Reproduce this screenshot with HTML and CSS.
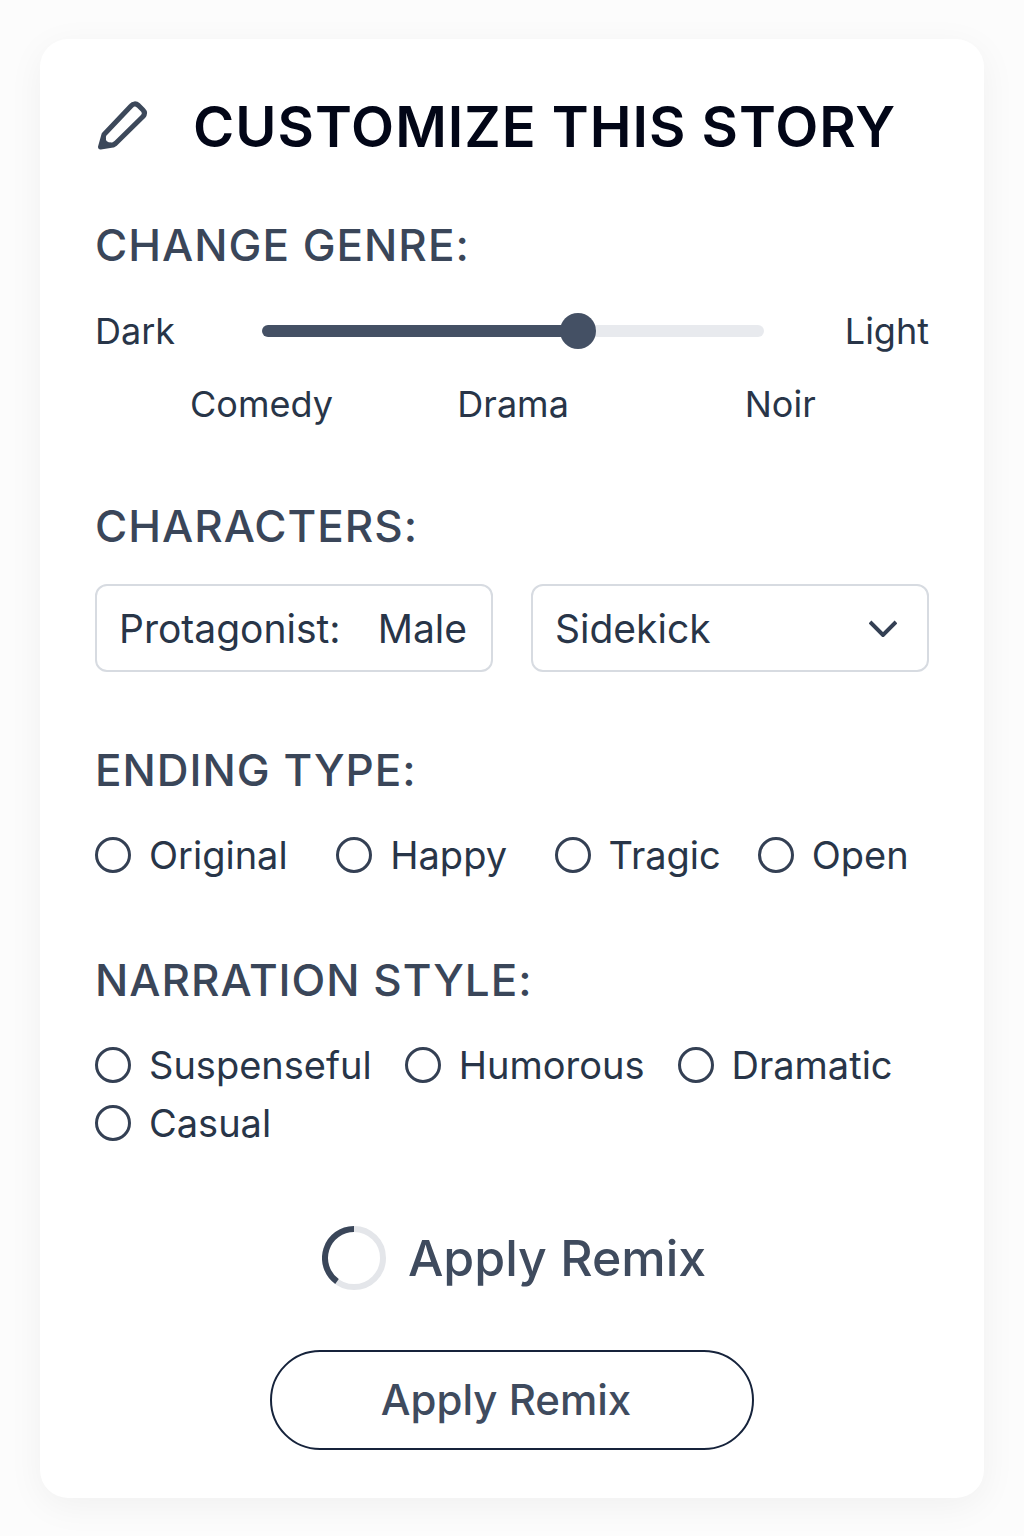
FILE: index.html
```html
<!DOCTYPE html>
<html lang="en">
<head>
<meta charset="utf-8">
<meta name="viewport" content="width=device-width, initial-scale=1">
<title>Customize This Story</title>
<link rel="stylesheet" href="styles.css">
</head>
<body>
<main>
<form class="card">
  <header class="card-header">
    <svg class="pencil" viewBox="0 0 56 56" aria-hidden="true">
      <path class="pencil-body" d="M5.500 48 9 35.500 36 7Q39.500 3 43.500 6.500L48 11Q51 14 48 17.500L20.500 44.500 18 46Z"/>
      <path class="pencil-tip" d="M4 50 7 36 11 38.500Q10 43.500 16.500 43.500L19 47.500Z"/>
    </svg>
    <h1 class="title">CUSTOMIZE THIS STORY</h1>
  </header>

  <section class="section">
    <h2 class="heading" id="genre">CHANGE GENRE:</h2>
    <div class="slider-row">
      <span>Dark</span>
      <input class="slider" type="range" min="0" max="100" value="64" aria-labelledby="genre">
      <span class="slider-end">Light</span>
    </div>
    <div class="genres">
      <span>Comedy</span>
      <span>Drama</span>
      <span>Noir</span>
    </div>
  </section>

  <section class="section">
    <h2 class="heading">CHARACTERS:</h2>
    <div class="fields">
      <div class="field">
        <label for="protagonist">Protagonist:</label>
        <input class="field-input" id="protagonist" type="text" value="Male">
      </div>
      <div class="field field-select">
        <select class="select" aria-label="Sidekick">
          <option>Sidekick</option>
        </select>
        <svg class="chevron" viewBox="0 0 28 18" aria-hidden="true"><path d="M1 3 14 16 27 3"/></svg>
      </div>
    </div>
  </section>

  <section class="section">
    <h2 class="heading" id="ending">ENDING TYPE:</h2>
    <div class="endings" role="radiogroup" aria-labelledby="ending">
      <label class="option"><input class="radio" type="radio" name="ending">Original</label>
      <label class="option"><input class="radio" type="radio" name="ending">Happy</label>
      <label class="option"><input class="radio" type="radio" name="ending">Tragic</label>
      <label class="option"><input class="radio" type="radio" name="ending">Open</label>
    </div>
  </section>

  <section class="section">
    <h2 class="heading" id="narration">NARRATION STYLE:</h2>
    <div class="narration" role="radiogroup" aria-labelledby="narration">
      <label class="option"><input class="radio" type="radio" name="narration">Suspenseful</label>
      <label class="option"><input class="radio" type="radio" name="narration">Humorous</label>
      <label class="option"><input class="radio" type="radio" name="narration">Dramatic</label>
      <label class="option"><input class="radio" type="radio" name="narration">Casual</label>
    </div>
  </section>

  <div class="status" role="status">
    <svg class="spinner" viewBox="0 0 64 64" aria-hidden="true">
      <circle class="spinner-track" cx="32" cy="32" r="29"/>
      <path class="spinner-arc" d="M32 3A29 29 0 0 0 15 55.500"/>
    </svg>
    <span>Apply Remix</span>
  </div>
  <button class="apply" type="button">Apply Remix</button>
</form>
</main>
</body>
</html>
```
FILE: styles.css
```css
* {
  box-sizing: border-box;
}

body {
  margin: 0;
  background: #fcfcfc;
  color: #283548;
  font-family: Inter, "Liberation Sans", sans-serif;
  font-size: 38px;
}

main {
  padding: 39px 40px 38px;
}

.card {
  display: flex;
  flex-direction: column;
  padding: 56px 55px 48px;
  border-radius: 28px;
  background: #fff;
  box-shadow: 0 8px 36px rgba(0, 0, 0, 0.05);
}

.card-header {
  display: flex;
  align-items: center;
  gap: 42px;
  margin-bottom: 58px;
}

.pencil {
  flex: none;
  width: 56px;
  height: 56px;
}

.pencil-body {
  fill: none;
  stroke: #3c485a;
  stroke-width: 5;
  stroke-linejoin: round;
}

.pencil-tip {
  fill: #3c485a;
}

.title {
  margin: 0;
  color: #020617;
  font-size: 56px;
  font-weight: 600;
  line-height: 64px;
  letter-spacing: 1px;
}

.section {
  margin-bottom: 70px;
}

.heading {
  margin: 0 0 30px;
  color: #3a4659;
  font-size: 44px;
  font-weight: 500;
  line-height: 56px;
  letter-spacing: 1px;
}

.slider-row {
  display: grid;
  grid-template-columns: 167px 1fr 165px;
  align-items: center;
  font-size: 36px;
  line-height: 56px;
}

.slider-end {
  text-align: right;
}

.slider {
  width: 100%;
  height: 36px;
  margin: 0;
  appearance: none;
  background: transparent;
}

.slider::-webkit-slider-runnable-track {
  height: 12px;
  border-radius: 6px;
  background: linear-gradient(to right, #445064 63%, #e8eaee 63%);
}

.slider::-webkit-slider-thumb {
  appearance: none;
  width: 36px;
  height: 36px;
  margin-top: -12px;
  border-radius: 50%;
  background: #445064;
}

.genres {
  display: grid;
  grid-template-columns: 267fr 287fr 184fr;
  margin-top: 21px;
  padding-left: 95px;
  font-size: 36px;
  line-height: 48px;
}

.fields {
  display: grid;
  grid-template-columns: 1fr 1fr;
  gap: 38px;
  font-size: 39px;
}

.field {
  display: flex;
  align-items: center;
  justify-content: space-between;
  height: 88px;
  padding: 0 24px 0 22px;
  border: 2px solid #d7dbe1;
  border-radius: 12px;
}

.field-input {
  width: 92px;
  padding: 0;
  border: 0;
  background: none;
  color: inherit;
  font: inherit;
  text-align: right;
}

.field-select {
  display: grid;
  grid-template-columns: 1fr;
  padding: 0;
}

.select {
  grid-area: 1 / 1;
  width: 100%;
  height: 84px;
  padding: 0 22px;
  border: 0;
  border-radius: 12px;
  appearance: none;
  background: none;
  color: inherit;
  font: inherit;
}

.chevron {
  grid-area: 1 / 1;
  justify-self: end;
  width: 28px;
  height: 18px;
  margin-right: 30px;
  fill: none;
  stroke: #344054;
  stroke-width: 4;
  pointer-events: none;
}

.endings {
  display: grid;
  grid-template-columns: 241fr 218fr 203fr 171fr;
}

.narration {
  display: flex;
  flex-wrap: wrap;
  gap: 4px 33px;
}

.option {
  display: flex;
  align-items: center;
  gap: 18px;
  line-height: 54px;
}

.radio {
  flex: none;
  width: 36px;
  height: 36px;
  margin: 0;
  border: 3px solid #344054;
  border-radius: 50%;
  appearance: none;
}

.radio:checked {
  background: radial-gradient(#344054 50%, transparent 52%);
}

.status {
  display: flex;
  align-items: center;
  justify-content: center;
  gap: 22px;
  margin: 6px 0 60px;
  padding-left: 4px;
  color: #3f4b5e;
  font-size: 50px;
  font-weight: 500;
  line-height: 64px;
}

.spinner {
  width: 64px;
  height: 64px;
  fill: none;
  stroke-width: 6;
}

.spinner-track {
  stroke: #e4e6ea;
}

.spinner-arc {
  stroke: #3a4659;
}

.apply {
  align-self: center;
  width: 484px;
  max-width: 100%;
  height: 100px;
  padding: 0 12px 2px 0;
  border: 2px solid #16233b;
  border-radius: 50px;
  background: #fff;
  color: #3f4b5e;
  font: 500 42px Inter, "Liberation Sans", sans-serif;
}
```
